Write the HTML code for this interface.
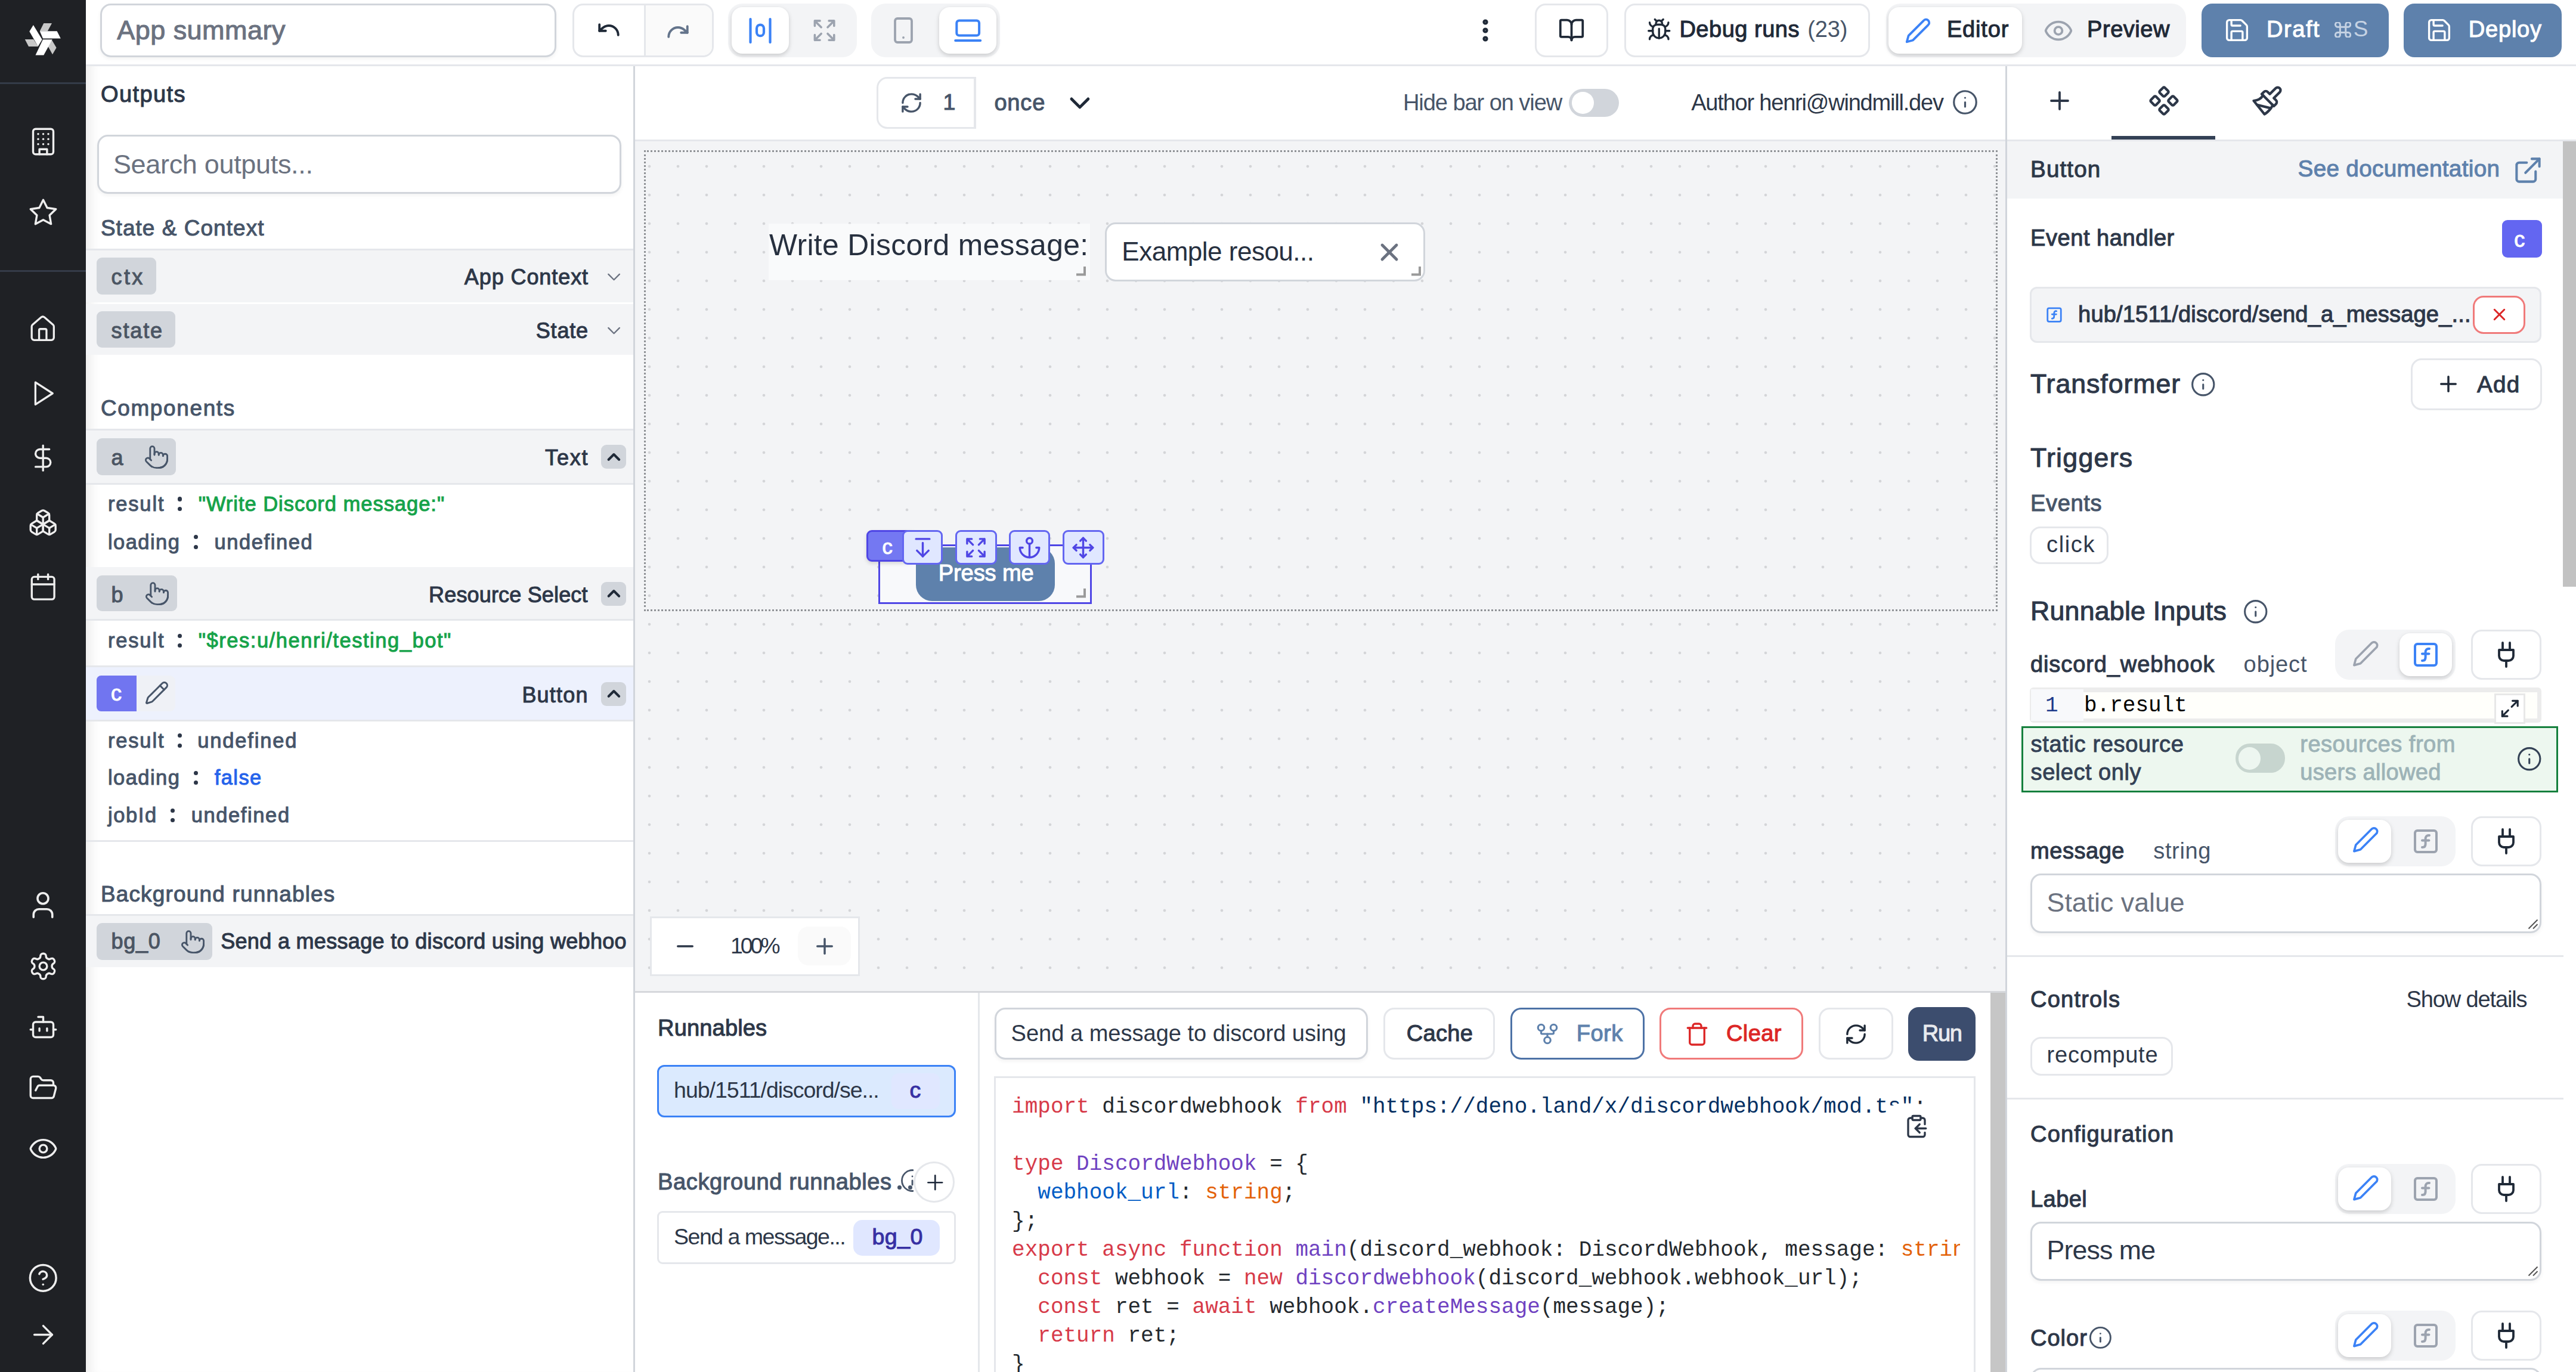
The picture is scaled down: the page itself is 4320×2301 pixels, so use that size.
<!DOCTYPE html><html><head><meta charset="utf-8"><style>html{zoom:3}
body{margin:0;width:1440px;height:767px;overflow:hidden;position:relative;background:#fff;font-family:"Liberation Sans",sans-serif;}
.a{position:absolute;box-sizing:border-box}
.t{position:absolute;white-space:nowrap;line-height:1;font-family:"Liberation Sans",sans-serif}
.m{font-family:"Liberation Mono",monospace;white-space:pre}
.b{font-weight:700}
</style></head><body><div class="a" style="left:0px;top:0px;width:48px;height:767px;background:#1f2125"></div>
<div class="a" style="left:0px;top:46px;width:48px;height:1px;background:#343b48"></div>
<div class="a" style="left:0px;top:151px;width:48px;height:1px;background:#343b48"></div>
<svg class="a" style="left:0;top:0;width:48px;height:48px" viewBox="0 0 48 48">
<path d="M16.45 17.6 L18.63 14.0 L23.55 22.08 L21.26 25.9 Z" fill="#fff"/>
<path d="M22.24 17.38 L24.43 13.0 L29.0 13.0 L26.6 17.38 Z" fill="#c8c8c8"/>
<path d="M22.24 17.38 L31.86 17.38 L33.93 21.53 L23.99 21.53 Z" fill="#fff"/>
<path d="M26.83 25.9 L29.0 22.4 L31.53 26.67 L29.34 30.4 Z" fill="#c8c8c8"/>
<path d="M23.99 22.08 L29.23 22.08 L24.43 30.82 L19.84 30.82 Z" fill="#fff"/>
<path d="M13.93 21.97 L18.74 21.97 L21.37 26.0 L16.0 26.0 Z" fill="#c8c8c8"/>
</svg>
<svg class="a" style="left:15.5px;top:70.5px;width:17px;height:17px;" viewBox="0 0 24 24" fill="none" stroke="#eeeeee" stroke-width="1.6" stroke-linecap="round" stroke-linejoin="round"><rect width="16" height="20" x="4" y="2" rx="2" ry="2"/><path d="M9 22v-4h6v4"/><path d="M8 6h.01"/><path d="M16 6h.01"/><path d="M12 6h.01"/><path d="M12 10h.01"/><path d="M12 14h.01"/><path d="M16 10h.01"/><path d="M16 14h.01"/><path d="M8 10h.01"/><path d="M8 14h.01"/></svg>
<svg class="a" style="left:15.5px;top:110.3px;width:17px;height:17px;" viewBox="0 0 24 24" fill="none" stroke="#eeeeee" stroke-width="1.6" stroke-linecap="round" stroke-linejoin="round"><polygon points="12 2 15.09 8.26 22 9.27 17 14.14 18.18 21.02 12 17.77 5.82 21.02 7 14.14 2 9.27 8.91 8.26 12 2"/></svg>
<svg class="a" style="left:15.75px;top:175.75px;width:16.5px;height:16.5px;" viewBox="0 0 24 24" fill="none" stroke="#eeeeee" stroke-width="1.6" stroke-linecap="round" stroke-linejoin="round"><path d="M15 21v-8a1 1 0 0 0-1-1h-4a1 1 0 0 0-1 1v8"/><path d="M3 10a2 2 0 0 1 .709-1.528l7-5.999a2 2 0 0 1 2.582 0l7 5.999A2 2 0 0 1 21 10v9a2 2 0 0 1-2 2H5a2 2 0 0 1-2-2z"/></svg>
<svg class="a" style="left:15.75px;top:211.75px;width:16.5px;height:16.5px;" viewBox="0 0 24 24" fill="none" stroke="#eeeeee" stroke-width="1.6" stroke-linecap="round" stroke-linejoin="round"><polygon points="6 3 20 12 6 21 6 3"/></svg>
<svg class="a" style="left:15.6px;top:247.6px;width:16.8px;height:16.8px;" viewBox="0 0 24 24" fill="none" stroke="#eeeeee" stroke-width="1.6" stroke-linecap="round" stroke-linejoin="round"><line x1="12" x2="12" y1="2" y2="22"/><path d="M17 5H9.5a3.5 3.5 0 0 0 0 7h5a3.5 3.5 0 0 1 0 7H6"/></svg>
<svg class="a" style="left:15.6px;top:283.6px;width:16.8px;height:16.8px;" viewBox="0 0 24 24" fill="none" stroke="#eeeeee" stroke-width="1.6" stroke-linecap="round" stroke-linejoin="round"><path d="M2.97 12.92A2 2 0 0 0 2 14.63v3.24a2 2 0 0 0 .97 1.71l3 1.8a2 2 0 0 0 2.06 0L12 19v-5.5l-5-3-4.03 2.42Z"/><path d="m7 16.5-4.74-2.85"/><path d="m7 16.5 5-3"/><path d="M7 16.5v5.17"/><path d="M12 13.5V19l3.97 2.38a2 2 0 0 0 2.06 0l3-1.8a2 2 0 0 0 .97-1.71v-3.24a2 2 0 0 0-.97-1.71L17 10.5l-5 3Z"/><path d="m17 16.5-5-3"/><path d="m17 16.5 4.74-2.85"/><path d="M17 16.5v5.17"/><path d="M7.97 4.42A2 2 0 0 0 7 6.13v4.37l5 3 5-3V6.13a2 2 0 0 0-.97-1.71l-3-1.8a2 2 0 0 0-2.06 0l-3 1.8Z"/><path d="M12 8 7.26 5.15"/><path d="m12 8 4.74-2.85"/><path d="M12 13.5V8"/></svg>
<svg class="a" style="left:15.6px;top:319.6px;width:16.8px;height:16.8px;" viewBox="0 0 24 24" fill="none" stroke="#eeeeee" stroke-width="1.6" stroke-linecap="round" stroke-linejoin="round"><rect width="18" height="18" x="3" y="4" rx="2"/><line x1="16" x2="16" y1="2" y2="6"/><line x1="8" x2="8" y1="2" y2="6"/><line x1="3" x2="21" y1="10" y2="10"/></svg>
<svg class="a" style="left:15px;top:497px;width:18px;height:18px;" viewBox="0 0 24 24" fill="none" stroke="#eeeeee" stroke-width="1.6" stroke-linecap="round" stroke-linejoin="round"><path d="M19 21v-2a4 4 0 0 0-4-4H9a4 4 0 0 0-4 4v2"/><circle cx="12" cy="7" r="4"/></svg>
<svg class="a" style="left:15.5px;top:531.5px;width:17px;height:17px;" viewBox="0 0 24 24" fill="none" stroke="#eeeeee" stroke-width="1.6" stroke-linecap="round" stroke-linejoin="round"><path d="M12.22 2h-.44a2 2 0 0 0-2 2v.18a2 2 0 0 1-1 1.73l-.43.25a2 2 0 0 1-2 0l-.15-.08a2 2 0 0 0-2.73.73l-.22.38a2 2 0 0 0 .73 2.73l.15.1a2 2 0 0 1 1 1.72v.51a2 2 0 0 1-1 1.74l-.15.09a2 2 0 0 0-.73 2.73l.22.38a2 2 0 0 0 2.73.73l.15-.08a2 2 0 0 1 2 0l.43.25a2 2 0 0 1 1 1.73V20a2 2 0 0 0 2 2h.44a2 2 0 0 0 2-2v-.18a2 2 0 0 1 1-1.73l.43-.25a2 2 0 0 1 2 0l.15.08a2 2 0 0 0 2.73-.73l.22-.39a2 2 0 0 0-.73-2.73l-.15-.08a2 2 0 0 1-1-1.74v-.5a2 2 0 0 1 1-1.74l.15-.09a2 2 0 0 0 .73-2.73l-.22-.38a2 2 0 0 0-2.73-.73l-.15.08a2 2 0 0 1-2 0l-.43-.25a2 2 0 0 1-1-1.73V4a2 2 0 0 0-2-2z"/><circle cx="12" cy="12" r="3"/></svg>
<svg class="a" style="left:15.5px;top:565.5px;width:17px;height:17px;" viewBox="0 0 24 24" fill="none" stroke="#eeeeee" stroke-width="1.6" stroke-linecap="round" stroke-linejoin="round"><path d="M12 8V4H8"/><rect width="16" height="12" x="4" y="8" rx="2"/><path d="M2 14h2"/><path d="M20 14h2"/><path d="M15 13v2"/><path d="M9 13v2"/></svg>
<svg class="a" style="left:15.5px;top:599.5px;width:17px;height:17px;" viewBox="0 0 24 24" fill="none" stroke="#eeeeee" stroke-width="1.6" stroke-linecap="round" stroke-linejoin="round"><path d="m6 14 1.5-2.9A2 2 0 0 1 9.24 10H20a2 2 0 0 1 1.94 2.5l-1.54 6a2 2 0 0 1-1.95 1.5H4a2 2 0 0 1-2-2V5a2 2 0 0 1 2-2h3.9a2 2 0 0 1 1.69.9l.81 1.2a2 2 0 0 0 1.67.9H18a2 2 0 0 1 2 2v2"/></svg>
<svg class="a" style="left:15.5px;top:633.5px;width:17px;height:17px;" viewBox="0 0 24 24" fill="none" stroke="#eeeeee" stroke-width="1.6" stroke-linecap="round" stroke-linejoin="round"><path d="M2.062 12.348a1 1 0 0 1 0-.696 10.75 10.75 0 0 1 19.876 0 1 1 0 0 1 0 .696 10.75 10.75 0 0 1-19.876 0"/><circle cx="12" cy="12" r="3"/></svg>
<svg class="a" style="left:15.25px;top:705.75px;width:17.5px;height:17.5px;" viewBox="0 0 24 24" fill="none" stroke="#eeeeee" stroke-width="1.6" stroke-linecap="round" stroke-linejoin="round"><circle cx="12" cy="12" r="10"/><path d="M9.09 9a3 3 0 0 1 5.83 1c0 2-3 3-3 3"/><path d="M12 17h.01"/></svg>
<svg class="a" style="left:15.5px;top:737.5px;width:17px;height:17px;" viewBox="0 0 24 24" fill="none" stroke="#eeeeee" stroke-width="1.6" stroke-linecap="round" stroke-linejoin="round"><path d="M5 12h14"/><path d="m12 5 7 7-7 7"/></svg>
<div class="a" style="left:48px;top:36px;width:1392px;height:1px;background:#e5e7eb"></div>
<div class="a" style="left:56px;top:2px;width:255px;height:30px;border:1px solid #d1d5db;border-radius:6px;box-shadow:0 1px 2px rgba(0,0,0,.05)"></div>
<span class="t " data-k="App summary|65.4|22.1" style="left:65.4px;top:9.4px;font-size:15px;color:#6b7280;letter-spacing:0.157px;-webkit-text-stroke:0.35px #6b7280;">App summary</span>
<div class="a" style="left:320px;top:2px;width:79px;height:30px;border:1px solid #e5e7eb;border-radius:6px;overflow:hidden"><div style="position:absolute;left:39px;top:0;right:0;bottom:0;background:#fafafa;border-left:1px solid #e5e7eb"></div></div>
<svg class="a" style="left:333.2px;top:9.8px;width:14px;height:14px;" viewBox="0 0 24 24" fill="none" stroke="#1f2937" stroke-width="2.2" stroke-linecap="round" stroke-linejoin="round"><path d="M3 7v6h6"/><path d="M21 17a9 9 0 0 0-9-9 9 9 0 0 0-6 2.3L3 13"/></svg>
<svg class="a" style="left:372px;top:10.5px;width:14px;height:14px;" viewBox="0 0 24 24" fill="none" stroke="#64748b" stroke-width="2.2" stroke-linecap="round" stroke-linejoin="round"><path d="M21 7v6h-6"/><path d="M3 17a9 9 0 0 1 9-9 9 9 0 0 1 6 2.3l3 2.7"/></svg>
<div class="a" style="left:407px;top:2px;width:72px;height:30px;background:#f3f4f6;border-radius:8px"></div>
<div class="a" style="left:409px;top:4px;width:32px;height:26px;background:#fff;border-radius:6px;box-shadow:0 1px 3px rgba(0,0,0,.12),0 1px 2px rgba(0,0,0,.06)"></div>
<svg class="a" style="left:418px;top:9.5px;width:14px;height:15px" viewBox="0 0 14 15" fill="none" stroke="#3b82f6" stroke-width="1.4" stroke-linecap="round"><path d="M1.5 1v13"/><path d="M12.5 1v13"/><rect x="5" y="4.2" width="4" height="6.2" rx="2"/></svg>
<svg class="a" style="left:453.8px;top:9.2px;width:14.4px;height:15.4px;" viewBox="0 0 24 24" fill="none" stroke="#9ca3af" stroke-width="2" stroke-linecap="round" stroke-linejoin="round"><path d="m21 21-6-6m6 6v-4.8m0 4.8h-4.8"/><path d="M3 16.2V21m0 0h4.8M3 21l6-6"/><path d="M21 7.8V3m0 0h-4.8M21 3l-6 6"/><path d="M3 7.8V3m0 0h4.8M3 3l6 6"/></svg>
<div class="a" style="left:487px;top:2px;width:72px;height:30px;background:#f3f4f6;border-radius:8px"></div>
<div class="a" style="left:525px;top:4px;width:32px;height:26px;background:#fff;border-radius:6px;box-shadow:0 1px 3px rgba(0,0,0,.12),0 1px 2px rgba(0,0,0,.06)"></div>
<svg class="a" style="left:497px;top:9px;width:16px;height:16px;" viewBox="0 0 24 24" fill="none" stroke="#9ca3af" stroke-width="1.9" stroke-linecap="round" stroke-linejoin="round"><rect width="14" height="20" x="5" y="2" rx="2" ry="2"/><path d="M12 18h.01"/></svg>
<svg class="a" style="left:532.6px;top:8.6px;width:16.8px;height:16.8px;" viewBox="0 0 24 24" fill="none" stroke="#3b82f6" stroke-width="1.9" stroke-linecap="round" stroke-linejoin="round"><rect width="18" height="12" x="3" y="4" rx="2" ry="2"/><line x1="2" x2="22" y1="20" y2="20"/></svg>
<svg class="a" style="left:822.4px;top:9px;width:16px;height:16px;" viewBox="0 0 24 24" fill="none" stroke="#1f2937" stroke-width="2.6" stroke-linecap="round" stroke-linejoin="round"><circle cx="12" cy="12" r="1"/><circle cx="12" cy="5" r="1"/><circle cx="12" cy="19" r="1"/></svg>
<div class="a" style="left:858px;top:2px;width:41px;height:30px;border:1px solid #e5e7eb;border-radius:6px"></div>
<svg class="a" style="left:871px;top:9.3px;width:15px;height:15px;" viewBox="0 0 24 24" fill="none" stroke="#1f2937" stroke-width="2" stroke-linecap="round" stroke-linejoin="round"><path d="M12 7v14"/><path d="M3 18a1 1 0 0 1-1-1V4a1 1 0 0 1 1-1h5a4 4 0 0 1 4 4 4 4 0 0 1 4-4h5a1 1 0 0 1 1 1v13a1 1 0 0 1-1 1h-6a3 3 0 0 0-3 3 3 3 0 0 0-3-3z"/></svg>
<div class="a" style="left:908px;top:2px;width:137.4px;height:30px;border:1px solid #e5e7eb;border-radius:6px"></div>
<svg class="a" style="left:919.5px;top:9.6px;width:15.5px;height:14px;" viewBox="0 0 24 24" fill="none" stroke="#1f2937" stroke-width="1.9" stroke-linecap="round" stroke-linejoin="round"><path d="m8 2 1.88 1.88"/><path d="M14.12 3.88 16 2"/><path d="M9 7.13v-1a3.003 3.003 0 1 1 6 0v1"/><path d="M12 20c-3.3 0-6-2.7-6-6v-3a4 4 0 0 1 4-4h4a4 4 0 0 1 4 4v3c0 3.3-2.7 6-6 6"/><path d="M12 20v-9"/><path d="M6.53 9C4.6 8.8 3 7.1 3 5"/><path d="M6 13H2"/><path d="M3 21c0-2.1 1.7-3.9 3.8-4"/><path d="M20.97 5c0 2.1-1.6 3.8-3.5 4"/><path d="M22 13h-4"/><path d="M17.2 17c2.1.1 3.8 1.9 3.8 4"/></svg>
<span class="t " data-k="Debug runs|938.8|20.8" style="left:938.8px;top:10.05px;font-size:12.7px;color:#1f2937;letter-spacing:0.156px;-webkit-text-stroke:0.35px #1f2937;">Debug runs</span>
<span class="t " data-k="(23)|1010.4|20.8" style="left:1010.4px;top:10.05px;font-size:12.7px;color:#475569;letter-spacing:-0.054px;">(23)</span>
<div class="a" style="left:1054.2px;top:2px;width:167.8px;height:30px;background:#f3f4f6;border-radius:8px"></div>
<div class="a" style="left:1055.8px;top:4px;width:74.6px;height:26px;background:#fff;border-radius:6px;box-shadow:0 1px 3px rgba(0,0,0,.12),0 1px 2px rgba(0,0,0,.06)"></div>
<svg class="a" style="left:1063.5px;top:9.5px;width:17px;height:15px;" viewBox="0 0 24 24" fill="none" stroke="#3b82f6" stroke-width="2" stroke-linecap="round" stroke-linejoin="round"><path d="M17 3a2.85 2.83 0 1 1 4 4L7.5 20.5 2 22l1.5-5.5Z"/></svg>
<span class="t " data-k="Editor|1088.3|20.8" style="left:1088.3px;top:10.05px;font-size:12.7px;color:#1f2937;letter-spacing:0.269px;-webkit-text-stroke:0.35px #1f2937;">Editor</span>
<svg class="a" style="left:1141.5px;top:8.5px;width:18px;height:17px;" viewBox="0 0 24 24" fill="none" stroke="#9ca3af" stroke-width="1.8" stroke-linecap="round" stroke-linejoin="round"><path d="M2.062 12.348a1 1 0 0 1 0-.696 10.75 10.75 0 0 1 19.876 0 1 1 0 0 1 0 .696 10.75 10.75 0 0 1-19.876 0"/><circle cx="12" cy="12" r="3"/></svg>
<span class="t " data-k="Preview|1166.7|20.8" style="left:1166.7px;top:10.05px;font-size:12.7px;color:#1f2937;letter-spacing:0.162px;-webkit-text-stroke:0.35px #1f2937;">Preview</span>
<div class="a" style="left:1230.5px;top:2px;width:104.8px;height:30px;background:#5e81ac;border-radius:6px"></div>
<svg class="a" style="left:1243px;top:9.3px;width:15px;height:15px;" viewBox="0 0 24 24" fill="none" stroke="#ffffff" stroke-width="1.8" stroke-linecap="round" stroke-linejoin="round"><path d="M15.2 3a2 2 0 0 1 1.4.6l3.8 3.8a2 2 0 0 1 .6 1.4V19a2 2 0 0 1-2 2H5a2 2 0 0 1-2-2V5a2 2 0 0 1 2-2z"/><path d="M17 21v-7a1 1 0 0 0-1-1H8a1 1 0 0 0-1 1v7"/><path d="M7 3v4a1 1 0 0 0 1 1h7"/></svg>
<span class="t " data-k="Draft|1267|20.8" style="left:1267px;top:10.05px;font-size:12.7px;color:#ffffff;letter-spacing:0.513px;-webkit-text-stroke:0.35px #ffffff;">Draft</span>
<svg class="a" style="left:1305px;top:12.4px;width:9.4px;height:8.6px" viewBox="0 0 12 11" fill="none" stroke="#c5d2e3" stroke-width="1.25"><path d="M4 3.5v4M8 3.5v4M4 3.5h4M4 7.5h4"/><path d="M4 3.5H2.5A1.7 1.7 0 1 1 4 1.9V3.5M8 3.5V1.9A1.7 1.7 0 1 1 9.5 3.5H8M8 7.5h1.5A1.7 1.7 0 1 1 8 9.1V7.5M4 7.5v1.6A1.7 1.7 0 1 1 2.5 7.5H4"/></svg>
<span class="t " data-k="S|1315.6|20.9" style="left:1315.6px;top:10.49px;font-size:12.3px;color:#c5d2e3;">S</span>
<div class="a" style="left:1343.5px;top:2px;width:88.5px;height:30px;background:#5e81ac;border-radius:6px"></div>
<svg class="a" style="left:1356px;top:9.3px;width:15px;height:15px;" viewBox="0 0 24 24" fill="none" stroke="#ffffff" stroke-width="1.8" stroke-linecap="round" stroke-linejoin="round"><path d="M15.2 3a2 2 0 0 1 1.4.6l3.8 3.8a2 2 0 0 1 .6 1.4V19a2 2 0 0 1-2 2H5a2 2 0 0 1-2-2V5a2 2 0 0 1 2-2z"/><path d="M17 21v-7a1 1 0 0 0-1-1H8a1 1 0 0 0-1 1v7"/><path d="M7 3v4a1 1 0 0 0 1 1h7"/></svg>
<span class="t " data-k="Deploy|1379.9|20.8" style="left:1379.9px;top:10.05px;font-size:12.7px;color:#ffffff;letter-spacing:0.260px;-webkit-text-stroke:0.35px #ffffff;">Deploy</span>
<div class="a" style="left:48px;top:37px;width:306px;height:730px;background:#fff;box-shadow:inset 7px 0 6px -4px rgba(0,0,0,.07)"></div>
<div class="a" style="left:354px;top:37px;width:1px;height:730px;background:#d1d5db"></div>
<span class="t " data-k="Outputs|56.3|57.1" style="left:56.3px;top:46.35px;font-size:12.7px;color:#2d3748;letter-spacing:0.460px;-webkit-text-stroke:0.35px #2d3748;">Outputs</span>
<div class="a" style="left:54.3px;top:75.4px;width:293.2px;height:32.9px;border:1px solid #d1d5db;border-radius:6px;box-shadow:0 1px 2px rgba(0,0,0,.05)"></div>
<span class="t " data-k="Search outputs...|63.3|97.1" style="left:63.3px;top:84.4px;font-size:15px;color:#6b7280;letter-spacing:-0.107px;">Search outputs...</span>
<span class="t " data-k="State &amp; Context|56.3|132.2" style="left:56.3px;top:121.79px;font-size:12.3px;color:#475569;letter-spacing:0.361px;-webkit-text-stroke:0.35px #475569;">State &amp; Context</span>
<div class="a" style="left:48px;top:139px;width:306px;height:1px;background:#e5e7eb"></div>
<div class="a" style="left:48px;top:140px;width:306px;height:29px;background:#f3f4f6"></div>
<div class="a" style="left:48px;top:170px;width:306px;height:28.3px;background:#f3f4f6"></div>
<div class="a" style="left:54px;top:144px;width:33.3px;height:20.75px;background:#d1d5db;border-radius:3px"></div>
<span class="t " data-k="ctx|62.2|159" style="left:62.2px;top:148.84px;font-size:12px;color:#4b5563;letter-spacing:1.128px;-webkit-text-stroke:0.35px #4b5563;">ctx</span>
<span class="t " data-k="App Context|259.6|159" style="left:259.6px;top:148.84px;font-size:12px;color:#2d3748;letter-spacing:0.305px;-webkit-text-stroke:0.35px #2d3748;">App Context</span>
<svg class="a" style="left:337px;top:148.5px;width:12.4px;height:12.4px;" viewBox="0 0 24 24" fill="none" stroke="#6b7280" stroke-width="1.5" stroke-linecap="round" stroke-linejoin="round"><path d="m6 9 6 6 6-6"/></svg>
<div class="a" style="left:54px;top:174px;width:44px;height:20.3px;background:#d1d5db;border-radius:3px"></div>
<span class="t " data-k="state|62.2|189" style="left:62.2px;top:178.84px;font-size:12px;color:#4b5563;letter-spacing:0.621px;-webkit-text-stroke:0.35px #4b5563;">state</span>
<span class="t " data-k="State|299.6|189" style="left:299.6px;top:178.84px;font-size:12px;color:#2d3748;letter-spacing:0.267px;-webkit-text-stroke:0.35px #2d3748;">State</span>
<svg class="a" style="left:337px;top:178.5px;width:12.4px;height:12.4px;" viewBox="0 0 24 24" fill="none" stroke="#6b7280" stroke-width="1.5" stroke-linecap="round" stroke-linejoin="round"><path d="m6 9 6 6 6-6"/></svg>
<span class="t " data-k="Components|56.3|232.8" style="left:56.3px;top:222.39px;font-size:12.3px;color:#475569;letter-spacing:0.563px;-webkit-text-stroke:0.35px #475569;">Components</span>
<div class="a" style="left:48px;top:239.5px;width:306px;height:1px;background:#e5e7eb"></div>
<div class="a" style="left:48px;top:240.5px;width:306px;height:29.5px;background:#f3f4f6"></div>
<div class="a" style="left:48px;top:270px;width:306px;height:1px;background:#e5e7eb"></div>
<div class="a" style="left:54px;top:245px;width:44.4px;height:20.5px;background:#d1d5db;border-radius:3px"></div>
<span class="t " data-k="a|62.2|260.3" style="left:62.2px;top:250.14px;font-size:12px;color:#4b5563;-webkit-text-stroke:0.35px #4b5563;">a</span>
<svg class="a" style="left:80.2px;top:248.2px;width:14.4px;height:14.4px;" viewBox="0 0 24 24" fill="none" stroke="#475569" stroke-width="1.6" stroke-linecap="round" stroke-linejoin="round"><path d="M22 14a8 8 0 0 1-8 8"/><path d="M18 11v-1a2 2 0 0 0-2-2a2 2 0 0 0-2 2"/><path d="M14 10V9a2 2 0 0 0-2-2a2 2 0 0 0-2 2v1"/><path d="M10 9.5V4a2 2 0 0 0-2-2a2 2 0 0 0-2 2v10"/><path d="M18 11a2 2 0 1 1 4 0v3a8 8 0 0 1-8 8h-2c-2.8 0-4.5-.86-5.99-2.34l-3.6-3.6a2 2 0 0 1 2.83-2.82L7 15"/></svg>
<span class="t " data-k="Text|304.7|260.3" style="left:304.7px;top:250.14px;font-size:12px;color:#2d3748;letter-spacing:0.595px;-webkit-text-stroke:0.35px #2d3748;">Text</span>
<div class="a" style="left:336.1px;top:248.8px;width:14px;height:13.3px;background:#d1d5db;border-radius:3px"></div>
<svg class="a" style="left:337.3px;top:249.5px;width:11.6px;height:11.6px;" viewBox="0 0 24 24" fill="none" stroke="#1f2937" stroke-width="2.8" stroke-linecap="round" stroke-linejoin="round"><path d="m18 15-6-6-6 6"/></svg>
<span class="t " data-k="result|60.3|285.7" style="left:60.3px;top:275.97px;font-size:11.5px;color:#475569;letter-spacing:0.615px;-webkit-text-stroke:0.35px #475569;">result</span>
<div class="a" style="left:99.3px;top:277.8px;width:2.4px;height:2.4px;background:#2d3748;border-radius:50%"></div>
<div class="a" style="left:99.3px;top:283.2px;width:2.4px;height:2.4px;background:#2d3748;border-radius:50%"></div>
<span class="t " data-k="&quot;Write Discord message:&quot;|110.9|285.7" style="left:110.9px;top:275.97px;font-size:11.5px;color:#16a34a;letter-spacing:0.325px;-webkit-text-stroke:0.35px #16a34a;">&quot;Write Discord message:&quot;</span>
<span class="t " data-k="loading|60.3|307" style="left:60.3px;top:297.27px;font-size:11.5px;color:#475569;letter-spacing:0.484px;-webkit-text-stroke:0.35px #475569;">loading</span>
<div class="a" style="left:108.3px;top:299.1px;width:2.4px;height:2.4px;background:#2d3748;border-radius:50%"></div>
<div class="a" style="left:108.3px;top:304.5px;width:2.4px;height:2.4px;background:#2d3748;border-radius:50%"></div>
<span class="t " data-k="undefined|119.8|307" style="left:119.8px;top:297.27px;font-size:11.5px;color:#475569;letter-spacing:0.534px;-webkit-text-stroke:0.35px #475569;">undefined</span>
<div class="a" style="left:48px;top:317px;width:306px;height:29px;background:#f3f4f6"></div>
<div class="a" style="left:48px;top:346px;width:306px;height:1px;background:#e5e7eb"></div>
<div class="a" style="left:54px;top:321.5px;width:45px;height:20px;background:#d1d5db;border-radius:3px"></div>
<span class="t " data-k="b|62.2|336.8" style="left:62.2px;top:326.64px;font-size:12px;color:#4b5563;-webkit-text-stroke:0.35px #4b5563;">b</span>
<svg class="a" style="left:80.8px;top:324.7px;width:14.4px;height:14.4px;" viewBox="0 0 24 24" fill="none" stroke="#475569" stroke-width="1.6" stroke-linecap="round" stroke-linejoin="round"><path d="M22 14a8 8 0 0 1-8 8"/><path d="M18 11v-1a2 2 0 0 0-2-2a2 2 0 0 0-2 2"/><path d="M14 10V9a2 2 0 0 0-2-2a2 2 0 0 0-2 2v1"/><path d="M10 9.5V4a2 2 0 0 0-2-2a2 2 0 0 0-2 2v10"/><path d="M18 11a2 2 0 1 1 4 0v3a8 8 0 0 1-8 8h-2c-2.8 0-4.5-.86-5.99-2.34l-3.6-3.6a2 2 0 0 1 2.83-2.82L7 15"/></svg>
<span class="t " data-k="Resource Select|239.7|336.8" style="left:239.7px;top:326.64px;font-size:12px;color:#2d3748;letter-spacing:0.054px;-webkit-text-stroke:0.35px #2d3748;">Resource Select</span>
<div class="a" style="left:336.1px;top:325.3px;width:14px;height:13.3px;background:#d1d5db;border-radius:3px"></div>
<svg class="a" style="left:337.3px;top:326px;width:11.6px;height:11.6px;" viewBox="0 0 24 24" fill="none" stroke="#1f2937" stroke-width="2.8" stroke-linecap="round" stroke-linejoin="round"><path d="m18 15-6-6-6 6"/></svg>
<span class="t " data-k="result|60.3|362.15" style="left:60.3px;top:352.42px;font-size:11.5px;color:#475569;letter-spacing:0.615px;-webkit-text-stroke:0.35px #475569;">result</span>
<div class="a" style="left:99.3px;top:354.25px;width:2.4px;height:2.4px;background:#2d3748;border-radius:50%"></div>
<div class="a" style="left:99.3px;top:359.65px;width:2.4px;height:2.4px;background:#2d3748;border-radius:50%"></div>
<span class="t " data-k="&quot;$res:u/henri/testing_bot&quot;|110.9|362.15" style="left:110.9px;top:352.42px;font-size:11.5px;color:#16a34a;letter-spacing:0.514px;-webkit-text-stroke:0.35px #16a34a;">&quot;$res:u/henri/testing_bot&quot;</span>
<div class="a" style="left:48px;top:372px;width:306px;height:1px;background:#e5e7eb"></div>
<div class="a" style="left:48px;top:373px;width:306px;height:29.3px;background:#edf1fd"></div>
<div class="a" style="left:48px;top:402.3px;width:306px;height:1px;background:#e5e7eb"></div>
<div class="a" style="left:54px;top:377.5px;width:22.3px;height:20.3px;background:#7175f0;border-radius:2.5px 0 0 2.5px"></div>
<div class="a" style="left:76.3px;top:377.5px;width:21.7px;height:20.3px;background:#eff1f6;border-radius:0 3px 3px 0"></div>
<span class="t " data-k="c|62|391.9" style="left:62px;top:381.74px;font-size:12px;color:#ffffff;-webkit-text-stroke:0.35px #ffffff;">c</span>
<svg class="a" style="left:80.5px;top:380.3px;width:14px;height:14px;" viewBox="0 0 24 24" fill="none" stroke="#475569" stroke-width="1.7" stroke-linecap="round" stroke-linejoin="round"><path d="M21.174 6.812a1 1 0 0 0-3.986-3.987L3.842 16.174a2 2 0 0 0-.5.83l-1.321 4.352a.5.5 0 0 0 .623.622l4.353-1.32a2 2 0 0 0 .83-.497z"/><path d="m15 5 4 4"/></svg>
<span class="t " data-k="Button|291.8|392.8" style="left:291.8px;top:382.64px;font-size:12px;color:#2d3748;letter-spacing:0.399px;-webkit-text-stroke:0.35px #2d3748;">Button</span>
<div class="a" style="left:336.1px;top:381.3px;width:14px;height:13.3px;background:#d1d5db;border-radius:3px"></div>
<svg class="a" style="left:337.3px;top:382px;width:11.6px;height:11.6px;" viewBox="0 0 24 24" fill="none" stroke="#1f2937" stroke-width="2.8" stroke-linecap="round" stroke-linejoin="round"><path d="m18 15-6-6-6 6"/></svg>
<span class="t " data-k="result|60.3|418" style="left:60.3px;top:408.27px;font-size:11.5px;color:#475569;letter-spacing:0.615px;-webkit-text-stroke:0.35px #475569;">result</span>
<div class="a" style="left:99.3px;top:410.1px;width:2.4px;height:2.4px;background:#2d3748;border-radius:50%"></div>
<div class="a" style="left:99.3px;top:415.5px;width:2.4px;height:2.4px;background:#2d3748;border-radius:50%"></div>
<span class="t " data-k="undefined|110.4|418" style="left:110.4px;top:408.27px;font-size:11.5px;color:#475569;letter-spacing:0.609px;-webkit-text-stroke:0.35px #475569;">undefined</span>
<span class="t " data-k="loading|60.3|438.8" style="left:60.3px;top:429.07px;font-size:11.5px;color:#475569;letter-spacing:0.484px;-webkit-text-stroke:0.35px #475569;">loading</span>
<div class="a" style="left:108.3px;top:430.9px;width:2.4px;height:2.4px;background:#2d3748;border-radius:50%"></div>
<div class="a" style="left:108.3px;top:436.3px;width:2.4px;height:2.4px;background:#2d3748;border-radius:50%"></div>
<span class="t " data-k="false|119.9|438.8" style="left:119.9px;top:429.07px;font-size:11.5px;color:#2563eb;letter-spacing:0.476px;-webkit-text-stroke:0.35px #2563eb;">false</span>
<span class="t " data-k="jobId|60.3|459.8" style="left:60.3px;top:450.07px;font-size:11.5px;color:#475569;letter-spacing:0.541px;-webkit-text-stroke:0.35px #475569;">jobId</span>
<div class="a" style="left:95.2px;top:451.9px;width:2.4px;height:2.4px;background:#2d3748;border-radius:50%"></div>
<div class="a" style="left:95.2px;top:457.3px;width:2.4px;height:2.4px;background:#2d3748;border-radius:50%"></div>
<span class="t " data-k="undefined|106.9|459.8" style="left:106.9px;top:450.07px;font-size:11.5px;color:#475569;letter-spacing:0.534px;-webkit-text-stroke:0.35px #475569;">undefined</span>
<div class="a" style="left:48px;top:469.75px;width:306px;height:1px;background:#e5e7eb"></div>
<span class="t " data-k="Background runnables|56.3|504.4" style="left:56.3px;top:493.99px;font-size:12.3px;color:#475569;letter-spacing:0.407px;-webkit-text-stroke:0.35px #475569;">Background runnables</span>
<div class="a" style="left:48px;top:511px;width:306px;height:1px;background:#e5e7eb"></div>
<div class="a" style="left:48px;top:512px;width:306px;height:28.7px;background:#f3f4f6"></div>
<div class="a" style="left:54px;top:516px;width:64.8px;height:20.7px;background:#d1d5db;border-radius:3px"></div>
<span class="t " data-k="bg_0|62.2|530.6" style="left:62.2px;top:520.44px;font-size:12px;color:#4b5563;letter-spacing:0.232px;-webkit-text-stroke:0.35px #4b5563;">bg_0</span>
<svg class="a" style="left:100.6px;top:519.2px;width:14.4px;height:14.4px;" viewBox="0 0 24 24" fill="none" stroke="#475569" stroke-width="1.6" stroke-linecap="round" stroke-linejoin="round"><path d="M22 14a8 8 0 0 1-8 8"/><path d="M18 11v-1a2 2 0 0 0-2-2a2 2 0 0 0-2 2"/><path d="M14 10V9a2 2 0 0 0-2-2a2 2 0 0 0-2 2v1"/><path d="M10 9.5V4a2 2 0 0 0-2-2a2 2 0 0 0-2 2v10"/><path d="M18 11a2 2 0 1 1 4 0v3a8 8 0 0 1-8 8h-2c-2.8 0-4.5-.86-5.99-2.34l-3.6-3.6a2 2 0 0 1 2.83-2.82L7 15"/></svg>
<div class="a" style="left:123px;top:515px;width:227px;height:22px;overflow:hidden">
<span class="t " data-k="Send a message to discord using webhoo|0.4|15.6" style="left:0.4px;top:5.44px;font-size:12px;color:#2d3748;letter-spacing:0.108px;-webkit-text-stroke:0.35px #2d3748;">Send a message to discord using webhoo</span>
</div>
<div class="a" style="left:355px;top:37px;width:766px;height:41px;background:#fff"></div>
<div class="a" style="left:355px;top:78px;width:766px;height:1px;background:#e5e7eb"></div>
<div class="a" style="left:490px;top:43px;width:55.5px;height:29px;border:1px solid #e5e7eb;border-right-width:1.5px;border-radius:6px 0 0 6px"></div>
<svg class="a" style="left:503px;top:51px;width:13px;height:13px;" viewBox="0 0 24 24" fill="none" stroke="#475569" stroke-width="2.1" stroke-linecap="round" stroke-linejoin="round"><path d="M3 12a9 9 0 0 1 9-9 9.75 9.75 0 0 1 6.74 2.74L21 8"/><path d="M21 3v5h-5"/><path d="M21 12a9 9 0 0 1-9 9 9.75 9.75 0 0 1-6.74-2.74L3 16"/><path d="M8 16H3v5"/></svg>
<span class="t " data-k="1|527.2|61.7" style="left:527.2px;top:51.12px;font-size:12.5px;color:#475569;-webkit-text-stroke:0.35px #475569;">1</span>
<span class="t " data-k="once|555.8|61.7" style="left:555.8px;top:50.95px;font-size:12.7px;color:#475569;letter-spacing:0.261px;-webkit-text-stroke:0.35px #475569;">once</span>
<svg class="a" style="left:594.2px;top:48.4px;width:18.6px;height:18.6px;" viewBox="0 0 24 24" fill="none" stroke="#1f2937" stroke-width="2.1" stroke-linecap="round" stroke-linejoin="round"><path d="m6 9 6 6 6-6"/></svg>
<span class="t " data-k="Hide bar on view|784.3|61.6" style="left:784.3px;top:50.85px;font-size:12.7px;color:#475569;letter-spacing:-0.360px;">Hide bar on view</span>
<div class="a" style="left:877px;top:49.6px;width:28px;height:15.8px;background:#d1d5db;border-radius:8px"></div>
<div class="a" style="left:878.8px;top:51.4px;width:12.2px;height:12.2px;background:#fff;border-radius:50%"></div>
<span class="t " data-k="Author henri@windmill.dev|945.4|61.7" style="left:945.4px;top:50.95px;font-size:12.7px;color:#2d3748;letter-spacing:-0.413px;">Author henri@windmill.dev</span>
<svg class="a" style="left:1091px;top:49.75px;width:15px;height:15px;" viewBox="0 0 24 24" fill="none" stroke="#475569" stroke-width="1.7" stroke-linecap="round" stroke-linejoin="round"><circle cx="12" cy="12" r="10"/><path d="M12 16v-4"/><path d="M12 8h.01"/></svg>
<div class="a" style="left:355px;top:79px;width:766px;height:475px;background-color:#f3f4f6;background-image:radial-gradient(circle,#d4d5d8 0.62px,transparent 0.9px);background-size:16px 16px;background-position:0px 6px"></div>
<div class="a" style="left:360px;top:84px;width:756.5px;height:257.8px;border:1px dotted #8f9296"></div>
<div class="a" style="left:429.6px;top:125px;width:179.6px;height:31.8px;background:rgba(249,250,251,.85)"></div>
<span class="t " data-k="Write Discord message:|430|142.9" style="left:430px;top:128.85px;font-size:16.6px;color:#27303f;letter-spacing:0.118px;">Write Discord message:</span>
<svg class="a" style="left:601.5px;top:149px;width:5.4px;height:5.2px" viewBox="0 0 5.4 5.2"><path d="M4 0h1.4v5.2H0V3.8h4z" fill="#9a9a9a"/></svg>
<div class="a" style="left:617.5px;top:124.2px;width:179.2px;height:33.3px;background:#fff;border:1px solid #d1d5db;border-radius:6px"></div>
<span class="t " data-k="Example resou...|627.1|145.8" style="left:627.1px;top:133.36px;font-size:14.7px;color:#27303f;letter-spacing:-0.181px;">Example resou...</span>
<svg class="a" style="left:768.6px;top:133px;width:16px;height:16px;" viewBox="0 0 24 24" fill="none" stroke="#6b7280" stroke-width="2.4" stroke-linecap="round" stroke-linejoin="round"><path d="M18 6 6 18"/><path d="m6 6 12 12"/></svg>
<svg class="a" style="left:789px;top:149px;width:5.4px;height:5.2px" viewBox="0 0 5.4 5.2"><path d="M4 0h1.4v5.2H0V3.8h4z" fill="#9a9a9a"/></svg>
<div class="a" style="left:491px;top:304.4px;width:119.3px;height:33.3px;background:#f8f9fb;border:1px solid #4f46e5"></div>
<div class="a" style="left:512px;top:306px;width:77.5px;height:30px;background:#5e81ac;border-radius:9px"></div>
<span class="t " data-k="Press me|524.6|324.9" style="left:524.6px;top:314.15px;font-size:12.7px;color:#ffffff;letter-spacing:-0.042px;-webkit-text-stroke:0.35px #ffffff;">Press me</span>
<svg class="a" style="left:601.5px;top:329px;width:5.4px;height:5.2px" viewBox="0 0 5.4 5.2"><path d="M4 0h1.4v5.2H0V3.8h4z" fill="#9a9a9a"/></svg>
<div class="a" style="left:484.2px;top:296.3px;width:27.8px;height:17.7px;background:#7478f2;border:1px solid #4f46e5;border-radius:3px;box-shadow:0 1px 2px rgba(0,0,0,.15)"></div>
<span class="t " data-k="c|493.2|309.6" style="left:493.2px;top:299.87px;font-size:11.5px;color:#ffffff;-webkit-text-stroke:0.35px #ffffff;">c</span>
<div class="a" style="left:504.4px;top:296.3px;width:22.7px;height:19.3px;background:#e0e7ff;border:1px solid #6366f1;border-radius:3px"></div>
<svg class="a" style="left:509.25px;top:299.5px;width:13px;height:13px;" viewBox="0 0 24 24" fill="none" stroke="#4f46e5" stroke-width="2.1" stroke-linecap="round" stroke-linejoin="round"><path d="M19 3H5"/><path d="M12 21V7"/><path d="m6 15 6 6 6-6"/></svg>
<div class="a" style="left:534.1px;top:296.3px;width:23.1px;height:19.3px;background:#e0e7ff;border:1px solid #6366f1;border-radius:3px"></div>
<svg class="a" style="left:539.15px;top:299.5px;width:13px;height:13px;" viewBox="0 0 24 24" fill="none" stroke="#4f46e5" stroke-width="2.1" stroke-linecap="round" stroke-linejoin="round"><path d="m21 21-6-6m6 6v-4.8m0 4.8h-4.8"/><path d="M3 16.2V21m0 0h4.8M3 21l6-6"/><path d="M21 7.8V3m0 0h-4.8M21 3l-6 6"/><path d="M3 7.8V3m0 0h4.8M3 3l6 6"/></svg>
<div class="a" style="left:563.9px;top:296.3px;width:23.2px;height:19.3px;background:#e0e7ff;border:1px solid #6366f1;border-radius:3px"></div>
<svg class="a" style="left:569px;top:299.5px;width:13px;height:13px;" viewBox="0 0 24 24" fill="none" stroke="#4f46e5" stroke-width="2.1" stroke-linecap="round" stroke-linejoin="round"><path d="M12 22V8"/><path d="M5 12H2a10 10 0 0 0 20 0h-3"/><circle cx="12" cy="5" r="3"/></svg>
<div class="a" style="left:594px;top:296.3px;width:23.3px;height:19.3px;background:#e0e7ff;border:1px solid #6366f1;border-radius:3px"></div>
<svg class="a" style="left:599.15px;top:299.5px;width:13px;height:13px;" viewBox="0 0 24 24" fill="none" stroke="#4f46e5" stroke-width="2.1" stroke-linecap="round" stroke-linejoin="round"><path d="M12 2v20"/><path d="m15 19-3 3-3-3"/><path d="m19 9 3 3-3 3"/><path d="M2 12h20"/><path d="m5 9-3 3 3 3"/><path d="m9 5 3-3 3 3"/></svg>
<div class="a" style="left:363.2px;top:512.3px;width:117.5px;height:33.4px;background:#fff;border:1px solid #e5e7eb"></div>
<svg class="a" style="left:376px;top:522px;width:14px;height:14px;" viewBox="0 0 24 24" fill="none" stroke="#2d3748" stroke-width="2" stroke-linecap="round" stroke-linejoin="round"><path d="M5 12h14"/></svg>
<span class="t " data-k="100%|408.3|533.2" style="left:408.3px;top:522.62px;font-size:12.5px;color:#2d3748;letter-spacing:-1.361px;">100%</span>
<div class="a" style="left:446px;top:518px;width:29.8px;height:21.8px;background:#fafafa;border-radius:6px"></div>
<svg class="a" style="left:454px;top:522px;width:14px;height:14px;" viewBox="0 0 24 24" fill="none" stroke="#475569" stroke-width="2" stroke-linecap="round" stroke-linejoin="round"><path d="M5 12h14"/><path d="M12 5v14"/></svg>
<div class="a" style="left:355px;top:554px;width:766px;height:1px;background:#d6d8dc"></div>
<div class="a" style="left:355px;top:555px;width:766px;height:212px;background:#fff"></div>
<div class="a" style="left:546.5px;top:555px;width:1px;height:212px;background:#e5e7eb"></div>
<span class="t " data-k="Runnables|367.7|579" style="left:367.7px;top:568.25px;font-size:12.7px;color:#2d3748;letter-spacing:0.041px;-webkit-text-stroke:0.35px #2d3748;">Runnables</span>
<div class="a" style="left:367.2px;top:595.2px;width:167px;height:29.6px;background:#dbeafe;border:1px solid #3b82f6;border-radius:4px"></div>
<span class="t " data-k="hub/1511/discord/se...|376.7|613.75" style="left:376.7px;top:603.17px;font-size:12.5px;color:#2d3748;letter-spacing:-0.342px;">hub/1511/discord/se...</span>
<div class="a" style="left:498.3px;top:600px;width:27.1px;height:20px;background:#e0e7ff;border-radius:4px"></div>
<span class="t " data-k="c|508.5|614" style="left:508.5px;top:603.42px;font-size:12.5px;color:#3730a3;-webkit-text-stroke:0.35px #3730a3;">c</span>
<span class="t " data-k="Background runnables|367.7|665" style="left:367.7px;top:654.25px;font-size:12.7px;color:#475569;letter-spacing:0.191px;-webkit-text-stroke:0.35px #475569;">Background runnables</span>
<div class="a" style="left:497px;top:650px;width:13.5px;height:20px;overflow:hidden">
<svg class="a" style="left:6px;top:2.9px;width:14px;height:14px;" viewBox="0 0 24 24" fill="none" stroke="#475569" stroke-width="1.6" stroke-linecap="round" stroke-linejoin="round"><circle cx="12" cy="12" r="10"/><path d="M12 16v-4"/><path d="M12 8h.01"/></svg>
</div>
<div class="a" style="left:501.5px;top:662.6px;width:2.4px;height:2.4px;background:#475569;border-radius:50%"></div>
<div class="a" style="left:507.6px;top:662.6px;width:2.4px;height:2.4px;background:#475569;border-radius:50%"></div>
<div class="a" style="left:510.8px;top:649.2px;width:22.95px;height:23.3px;background:#fff;border:1px solid #e5e7eb;border-radius:50%"></div>
<svg class="a" style="left:515.85px;top:654.35px;width:13.5px;height:13.5px;" viewBox="0 0 24 24" fill="none" stroke="#1e293b" stroke-width="1.6" stroke-linecap="round" stroke-linejoin="round"><path d="M5 12h14"/><path d="M12 5v14"/></svg>
<div class="a" style="left:367.2px;top:677px;width:167px;height:29.7px;background:#fff;border:1px solid #e5e7eb;border-radius:3px"></div>
<span class="t " data-k="Send a message...|376.7|695.8" style="left:376.7px;top:685.22px;font-size:12.5px;color:#2d3748;letter-spacing:-0.502px;">Send a message...</span>
<div class="a" style="left:477px;top:682px;width:48.4px;height:20px;background:#e0e7ff;border-radius:5px"></div>
<span class="t " data-k="bg_0|487.5|695.8" style="left:487.5px;top:685.22px;font-size:12.5px;color:#3730a3;letter-spacing:0.163px;-webkit-text-stroke:0.35px #3730a3;">bg_0</span>
<div class="a" style="left:556px;top:563.3px;width:208.6px;height:29.2px;border:1px solid #d1d5db;border-radius:6px;box-shadow:0 1px 2px rgba(0,0,0,.05)"></div>
<span class="t " data-k="Send a message to discord using|565.2|582" style="left:565.2px;top:571.25px;font-size:12.7px;color:#2d3748;letter-spacing:-0.010px;">Send a message to discord using</span>
<div class="a" style="left:773.3px;top:563.3px;width:62.4px;height:29.2px;border:1px solid #e5e7eb;border-radius:6px"></div>
<span class="t " data-k="Cache|786.25|582" style="left:786.25px;top:571.25px;font-size:12.7px;color:#2d3748;letter-spacing:0.091px;-webkit-text-stroke:0.35px #2d3748;">Cache</span>
<div class="a" style="left:844.2px;top:563.3px;width:75px;height:29.2px;border:1px solid #4d72a6;border-radius:6px"></div>
<svg class="a" style="left:858px;top:571px;width:14px;height:14px;" viewBox="0 0 24 24" fill="none" stroke="#5e81ac" stroke-width="1.8" stroke-linecap="round" stroke-linejoin="round"><circle cx="12" cy="18" r="3"/><circle cx="6" cy="6" r="3"/><circle cx="18" cy="6" r="3"/><path d="M18 9v2c0 .6-.4 1-1 1H7c-.6 0-1-.4-1-1V9"/><path d="M12 12v3"/></svg>
<span class="t " data-k="Fork|881.25|582" style="left:881.25px;top:571.25px;font-size:12.7px;color:#5e81ac;letter-spacing:0.142px;-webkit-text-stroke:0.35px #5e81ac;">Fork</span>
<div class="a" style="left:927.7px;top:563.3px;width:80.2px;height:29.2px;border:1px solid #f07a7a;border-radius:6px"></div>
<svg class="a" style="left:941.5px;top:570.5px;width:14px;height:15px;" viewBox="0 0 24 24" fill="none" stroke="#dc2626" stroke-width="1.9" stroke-linecap="round" stroke-linejoin="round"><path d="M3 6h18"/><path d="M19 6v14c0 1-1 2-2 2H7c-1 0-2-1-2-2V6"/><path d="M8 6V4c0-1 1-2 2-2h4c1 0 2 1 2 2v2"/></svg>
<span class="t " data-k="Clear|965|582" style="left:965px;top:571.25px;font-size:12.7px;color:#dc2626;letter-spacing:0.118px;-webkit-text-stroke:0.35px #dc2626;">Clear</span>
<div class="a" style="left:1016.8px;top:563.3px;width:41.4px;height:29.2px;border:1px solid #e5e7eb;border-radius:6px"></div>
<svg class="a" style="left:1031px;top:571.5px;width:13px;height:13px;" viewBox="0 0 24 24" fill="none" stroke="#1f2937" stroke-width="2.1" stroke-linecap="round" stroke-linejoin="round"><path d="M3 12a9 9 0 0 1 9-9 9.75 9.75 0 0 1 6.74 2.74L21 8"/><path d="M21 3v5h-5"/><path d="M21 12a9 9 0 0 1-9 9 9.75 9.75 0 0 1-6.74-2.74L3 16"/><path d="M8 16H3v5"/></svg>
<div class="a" style="left:1066.7px;top:562.9px;width:37.6px;height:30px;background:#3c4d6e;border-radius:6px"></div>
<span class="t " data-k="Run|1074.6|582" style="left:1074.6px;top:571.25px;font-size:12.7px;color:#e8eaee;letter-spacing:-0.441px;-webkit-text-stroke:0.35px #e8eaee;">Run</span>
<div class="a" style="left:555.8px;top:601.5px;width:548.7px;height:188.5px;border:1px solid #e5e7eb"></div>
<div class="a" style="left:556.8px;top:602.5px;width:539px;height:165px;overflow:hidden">
<span class="t m" data-k="&lt;span style=&quot;color:#d73a49&quot;&gt;import&lt;/span&gt;&lt;span style=&quot;color:#24292e&quot;&gt; discordwebhook &lt;/span&gt;&lt;span style=&quot;color:#d73a49&quot;&gt;from&lt;/span&gt; &lt;span style=&quot;color:#032f62&quot;&gt;&amp;quot;https://deno.land/x/discordwebhook/mod.ts&amp;quot;&lt;/span&gt;&lt;span style=&quot;color:#24292e&quot;&gt;;&lt;/span&gt;|8.9|19.6" style="left:8.9px;top:10.41px;font-size:12px;color:#24292e;"><span style="color:#d73a49">import</span><span style="color:#24292e"> discordwebhook </span><span style="color:#d73a49">from</span> <span style="color:#032f62">&quot;https://deno.land/x/discordwebhook/mod.ts&quot;</span><span style="color:#24292e">;</span></span>
<span class="t m" data-k="&lt;span style=&quot;color:#d73a49&quot;&gt;type&lt;/span&gt; &lt;span style=&quot;color:#6f42c1&quot;&gt;DiscordWebhook&lt;/span&gt;&lt;span style=&quot;color:#24292e&quot;&gt; = {&lt;/span&gt;|8.9|51.6" style="left:8.9px;top:42.41px;font-size:12px;color:#24292e;"><span style="color:#d73a49">type</span> <span style="color:#6f42c1">DiscordWebhook</span><span style="color:#24292e"> = {</span></span>
<span class="t m" data-k="&lt;span style=&quot;color:#005cc5&quot;&gt;  webhook_url&lt;/span&gt;&lt;span style=&quot;color:#24292e&quot;&gt;: &lt;/span&gt;&lt;span style=&quot;color:#e36209&quot;&gt;string&lt;/span&gt;&lt;span style=&quot;color:#24292e&quot;&gt;;&lt;/span&gt;|8.9|67.6" style="left:8.9px;top:58.41px;font-size:12px;color:#24292e;"><span style="color:#005cc5">  webhook_url</span><span style="color:#24292e">: </span><span style="color:#e36209">string</span><span style="color:#24292e">;</span></span>
<span class="t m" data-k="&lt;span style=&quot;color:#24292e&quot;&gt;};&lt;/span&gt;|8.9|83.6" style="left:8.9px;top:74.41px;font-size:12px;color:#24292e;"><span style="color:#24292e">};</span></span>
<span class="t m" data-k="&lt;span style=&quot;color:#d73a49&quot;&gt;export&lt;/span&gt; &lt;span style=&quot;color:#d73a49&quot;&gt;async&lt;/span&gt; &lt;span style=&quot;color:#d73a49&quot;&gt;function&lt;/span&gt; &lt;span style=&quot;color:#6f42c1&quot;&gt;main&lt;/span&gt;&lt;span style=&quot;color:#24292e&quot;&gt;(discord_webhook: DiscordWebhook, message: &lt;/span&gt;&lt;span style=&quot;color:#e36209&quot;&gt;string&lt;/span&gt;&lt;span style=&quot;color:#24292e&quot;&gt;) {&lt;/span&gt;|8.9|99.6" style="left:8.9px;top:90.41px;font-size:12px;color:#24292e;"><span style="color:#d73a49">export</span> <span style="color:#d73a49">async</span> <span style="color:#d73a49">function</span> <span style="color:#6f42c1">main</span><span style="color:#24292e">(discord_webhook: DiscordWebhook, message: </span><span style="color:#e36209">string</span><span style="color:#24292e">) {</span></span>
<span class="t m" data-k="&lt;span style=&quot;color:#d73a49&quot;&gt;  const&lt;/span&gt;&lt;span style=&quot;color:#24292e&quot;&gt; webhook = &lt;/span&gt;&lt;span style=&quot;color:#d73a49&quot;&gt;new&lt;/span&gt; &lt;span style=&quot;color:#6f42c1&quot;&gt;discordwebhook&lt;/span&gt;&lt;span style=&quot;color:#24292e&quot;&gt;(discord_webhook.webhook_url);&lt;/span&gt;|8.9|115.6" style="left:8.9px;top:106.41px;font-size:12px;color:#24292e;"><span style="color:#d73a49">  const</span><span style="color:#24292e"> webhook = </span><span style="color:#d73a49">new</span> <span style="color:#6f42c1">discordwebhook</span><span style="color:#24292e">(discord_webhook.webhook_url);</span></span>
<span class="t m" data-k="&lt;span style=&quot;color:#d73a49&quot;&gt;  const&lt;/span&gt;&lt;span style=&quot;color:#24292e&quot;&gt; ret = &lt;/span&gt;&lt;span style=&quot;color:#d73a49&quot;&gt;await&lt;/span&gt;&lt;span style=&quot;color:#24292e&quot;&gt; webhook.&lt;/span&gt;&lt;span style=&quot;color:#6f42c1&quot;&gt;createMessage&lt;/span&gt;&lt;span style=&quot;color:#24292e&quot;&gt;(message);&lt;/span&gt;|8.9|131.6" style="left:8.9px;top:122.41px;font-size:12px;color:#24292e;"><span style="color:#d73a49">  const</span><span style="color:#24292e"> ret = </span><span style="color:#d73a49">await</span><span style="color:#24292e"> webhook.</span><span style="color:#6f42c1">createMessage</span><span style="color:#24292e">(message);</span></span>
<span class="t m" data-k="&lt;span style=&quot;color:#d73a49&quot;&gt;  return&lt;/span&gt;&lt;span style=&quot;color:#24292e&quot;&gt; ret;&lt;/span&gt;|8.9|147.6" style="left:8.9px;top:138.41px;font-size:12px;color:#24292e;"><span style="color:#d73a49">  return</span><span style="color:#24292e"> ret;</span></span>
<span class="t m" data-k="&lt;span style=&quot;color:#24292e&quot;&gt;}&lt;/span&gt;|8.9|163.6" style="left:8.9px;top:154.41px;font-size:12px;color:#24292e;"><span style="color:#24292e">}</span></span>
</div>
<div class="a" style="left:1056px;top:618.1px;width:36px;height:21.9px;background:#fff"></div>
<svg class="a" style="left:1064.4px;top:622.8px;width:14px;height:14px;" viewBox="0 0 24 24" fill="none" stroke="#2d3748" stroke-width="1.9" stroke-linecap="round" stroke-linejoin="round"><rect width="8" height="4" x="8" y="2" rx="1" ry="1"/><path d="M8 4H6a2 2 0 0 0-2 2v14a2 2 0 0 0 2 2h12a2 2 0 0 0 2-2v-2"/><path d="M16 4h2a2 2 0 0 1 2 2v4"/><path d="M21 14H11"/><path d="m15 10-4 4 4 4"/></svg>
<div class="a" style="left:1112.5px;top:555px;width:9px;height:212px;background:#c6c6c6"></div>
<div class="a" style="left:1121px;top:37px;width:1px;height:730px;background:#d1d5db"></div>
<div class="a" style="left:1122px;top:37px;width:318px;height:730px;background:#fff"></div>
<div class="a" style="left:1122px;top:78px;width:318px;height:1px;background:#e5e7eb"></div>
<svg class="a" style="left:1143.3px;top:48.3px;width:16px;height:16px;" viewBox="0 0 24 24" fill="none" stroke="#2d3748" stroke-width="1.9" stroke-linecap="round" stroke-linejoin="round"><path d="M5 12h14"/><path d="M12 5v14"/></svg>
<svg class="a" style="left:1200.5px;top:47.3px;width:18px;height:18px;" viewBox="0 0 24 24" fill="none" stroke="#2d3748" stroke-width="1.9" stroke-linecap="round" stroke-linejoin="round"><path d="M15.536 11.293a1 1 0 0 0 0 1.414l2.376 2.377a1 1 0 0 0 1.414 0l2.377-2.377a1 1 0 0 0 0-1.414l-2.377-2.377a1 1 0 0 0-1.414 0z"/><path d="M2.297 11.293a1 1 0 0 0 0 1.414l2.377 2.377a1 1 0 0 0 1.414 0l2.377-2.377a1 1 0 0 0 0-1.414L6.088 8.916a1 1 0 0 0-1.414 0z"/><path d="M8.916 17.912a1 1 0 0 0 0 1.415l2.377 2.376a1 1 0 0 0 1.414 0l2.377-2.376a1 1 0 0 0 0-1.415l-2.377-2.376a1 1 0 0 0-1.414 0z"/><path d="M8.916 4.674a1 1 0 0 0 0 1.414l2.377 2.376a1 1 0 0 0 1.414 0l2.377-2.376a1 1 0 0 0 0-1.414l-2.377-2.377a1 1 0 0 0-1.414 0z"/></svg>
<svg class="a" style="left:1258.4px;top:47.3px;width:18px;height:18px;" viewBox="0 0 24 24" fill="none" stroke="#2d3748" stroke-width="1.9" stroke-linecap="round" stroke-linejoin="round"><path d="M18.37 2.63 14 7l-1.59-1.59a2 2 0 0 0-2.82 0L8 7l9 9 1.59-1.59a2 2 0 0 0 0-2.82L17 10l4.37-4.37a2.12 2.12 0 1 0-3-3Z"/><path d="M9 8c-2 3-4 3.5-7 4l8 10c2-1 6-5 6-7"/><path d="M14.5 17.5 4.5 15"/></svg>
<div class="a" style="left:1180.4px;top:76px;width:57.9px;height:2px;background:#334155"></div>
<div class="a" style="left:1122px;top:79px;width:311px;height:32px;background:#f3f4f6"></div>
<div class="a" style="left:1432.8px;top:79px;width:7.2px;height:249px;background:#c2c2c2"></div>
<span class="t " data-k="Button|1135|99.2" style="left:1135px;top:88.28px;font-size:12.9px;color:#2d3748;letter-spacing:0.364px;-webkit-text-stroke:0.35px #2d3748;">Button</span>
<span class="t " data-k="See documentation|1284.5|98.8" style="left:1284.5px;top:87.88px;font-size:12.9px;color:#5e81ac;letter-spacing:0.107px;-webkit-text-stroke:0.35px #5e81ac;">See documentation</span>
<svg class="a" style="left:1404.5px;top:86.5px;width:17px;height:17px;" viewBox="0 0 24 24" fill="none" stroke="#5e81ac" stroke-width="1.9" stroke-linecap="round" stroke-linejoin="round"><path d="M15 3h6v6"/><path d="M10 14 21 3"/><path d="M18 13v6a2 2 0 0 1-2 2H5a2 2 0 0 1-2-2V8a2 2 0 0 1 2-2h6"/></svg>
<span class="t " data-k="Event handler|1135|137.5" style="left:1135px;top:126.75px;font-size:12.7px;color:#2d3748;letter-spacing:0.175px;-webkit-text-stroke:0.35px #2d3748;">Event handler</span>
<div class="a" style="left:1398.5px;top:123.1px;width:22.5px;height:20.8px;background:#6366f1;border-radius:3px"></div>
<span class="t " data-k="c|1405.4|138" style="left:1405.4px;top:127.84px;font-size:12px;color:#ffffff;-webkit-text-stroke:0.35px #ffffff;">c</span>
<div class="a" style="left:1134.8px;top:160.25px;width:285.95px;height:31.45px;background:#f3f4f6;border:1px solid #e5e7eb;border-radius:4px"></div>
<svg class="a" style="left:1143.2px;top:170.9px;width:10px;height:10px;" viewBox="0 0 24 24" fill="none" stroke="#3b82f6" stroke-width="2.2" stroke-linecap="round" stroke-linejoin="round"><rect width="18" height="18" x="3" y="3" rx="2" ry="2"/><path d="M9 17c2 0 2.8-1 2.8-2.8V10c0-2 1-3.3 3.2-3"/><path d="M9 11.2h5.7"/></svg>
<span class="t " data-k="hub/1511/discord/send_a_message_...|1161.7|180" style="left:1161.7px;top:169.25px;font-size:12.7px;color:#2d3748;letter-spacing:0.049px;-webkit-text-stroke:0.35px #2d3748;">hub/1511/discord/send_a_message_...</span>
<div class="a" style="left:1382.2px;top:165.25px;width:29.55px;height:21.25px;background:#fff;border:1px solid #f07a7a;border-radius:6px"></div>
<svg class="a" style="left:1391.5px;top:170.4px;width:11px;height:11px;" viewBox="0 0 24 24" fill="none" stroke="#dc2626" stroke-width="2.2" stroke-linecap="round" stroke-linejoin="round"><path d="M18 6 6 18"/><path d="m6 6 12 12"/></svg>
<span class="t " data-k="Transformer|1135|220" style="left:1135px;top:207.39px;font-size:14.9px;color:#2d3748;letter-spacing:0.317px;-webkit-text-stroke:0.35px #2d3748;">Transformer</span>
<svg class="a" style="left:1224.2px;top:207.7px;width:14.5px;height:14.5px;" viewBox="0 0 24 24" fill="none" stroke="#475569" stroke-width="1.7" stroke-linecap="round" stroke-linejoin="round"><circle cx="12" cy="12" r="10"/><path d="M12 16v-4"/><path d="M12 8h.01"/></svg>
<div class="a" style="left:1347.6px;top:200.3px;width:73.4px;height:29.1px;border:1px solid #e5e7eb;border-radius:6px"></div>
<svg class="a" style="left:1361.6px;top:207.7px;width:14px;height:14px;" viewBox="0 0 24 24" fill="none" stroke="#1f2937" stroke-width="2" stroke-linecap="round" stroke-linejoin="round"><path d="M5 12h14"/><path d="M12 5v14"/></svg>
<span class="t " data-k="Add|1384.7|219.6" style="left:1384.7px;top:208.68px;font-size:12.9px;color:#2d3748;letter-spacing:0.381px;-webkit-text-stroke:0.35px #2d3748;">Add</span>
<span class="t " data-k="Triggers|1135|261.25" style="left:1135px;top:248.64px;font-size:14.9px;color:#2d3748;letter-spacing:0.427px;-webkit-text-stroke:0.35px #2d3748;">Triggers</span>
<span class="t " data-k="Events|1135|285.8" style="left:1135px;top:275.05px;font-size:12.7px;color:#475569;letter-spacing:0.201px;-webkit-text-stroke:0.35px #475569;">Events</span>
<div class="a" style="left:1134.8px;top:294.2px;width:43.95px;height:21.2px;border:1px solid #e5e7eb;border-radius:6px"></div>
<span class="t " data-k="click|1144|308.75" style="left:1144px;top:298px;font-size:12.7px;color:#2d3748;letter-spacing:0.532px;">click</span>
<span class="t " data-k="Runnable Inputs|1135|347.1" style="left:1135px;top:334.49px;font-size:14.9px;color:#2d3748;letter-spacing:0.078px;-webkit-text-stroke:0.35px #2d3748;">Runnable Inputs</span>
<svg class="a" style="left:1253.6px;top:334.6px;width:14.5px;height:14.5px;" viewBox="0 0 24 24" fill="none" stroke="#475569" stroke-width="1.7" stroke-linecap="round" stroke-linejoin="round"><circle cx="12" cy="12" r="10"/><path d="M12 16v-4"/><path d="M12 8h.01"/></svg>
<span class="t " data-k="discord_webhook|1135|375.8" style="left:1135px;top:365.05px;font-size:12.7px;color:#2d3748;letter-spacing:0.289px;-webkit-text-stroke:0.35px #2d3748;">discord_webhook</span>
<span class="t " data-k="object|1254.2|375.8" style="left:1254.2px;top:365.05px;font-size:12.7px;color:#475569;letter-spacing:0.288px;">object</span>
<div class="a" style="left:1305.2px;top:352px;width:67.6px;height:28px;background:#f3f4f6;border-radius:8px"></div>
<div class="a" style="left:1341.2px;top:354px;width:29.55px;height:24px;background:#fff;border-radius:6px;box-shadow:0 1px 3px rgba(0,0,0,.12),0 1px 2px rgba(0,0,0,.06)"></div>
<svg class="a" style="left:1314.5px;top:357.5px;width:15.5px;height:15.5px;" viewBox="0 0 24 24" fill="none" stroke="#9ca3af" stroke-width="1.9" stroke-linecap="round" stroke-linejoin="round"><path d="M17 3a2.85 2.83 0 1 1 4 4L7.5 20.5 2 22l1.5-5.5Z"/></svg>
<svg class="a" style="left:1348px;top:358px;width:16px;height:16px;" viewBox="0 0 24 24" fill="none" stroke="#3b82f6" stroke-width="2" stroke-linecap="round" stroke-linejoin="round"><rect width="18" height="18" x="3" y="3" rx="2" ry="2"/><path d="M9 17c2 0 2.8-1 2.8-2.8V10c0-2 1-3.3 3.2-3"/><path d="M9 11.2h5.7"/></svg>
<div class="a" style="left:1381.2px;top:352px;width:39.55px;height:28px;border:1px solid #e5e7eb;border-radius:6px;background:#fff"></div>
<svg class="a" style="left:1393px;top:358px;width:16px;height:16px;" viewBox="0 0 24 24" fill="none" stroke="#1f2937" stroke-width="1.9" stroke-linecap="round" stroke-linejoin="round"><path d="M12 22v-5"/><path d="M9 8V2"/><path d="M15 8V2"/><path d="M18 8v5a4 4 0 0 1-4 4h-4a4 4 0 0 1-4-4V8Z"/></svg>
<div class="a" style="left:1134.6px;top:384.2px;width:286.15px;height:19.8px;background:#ececec;border-radius:2px"></div>
<div class="a" style="left:1135.4px;top:385.2px;width:29.2px;height:17.8px;background:#f8f9fb"></div>
<div class="a" style="left:1164.6px;top:387px;width:253.9px;height:14.5px;background:#fffffb"></div>
<span class="t m" data-k="1|1143.3|397.9" style="left:1143.3px;top:388.71px;font-size:12px;color:#1e3a8a;">1</span>
<span class="t m" data-k="b.result|1165|397.9" style="left:1165px;top:388.71px;font-size:12px;color:#000000;">b.result</span>
<div class="a" style="left:1394.3px;top:387.5px;width:17.5px;height:17.1px;background:#fff;border:1px solid #e8e8e8"></div>
<svg class="a" style="left:1397.25px;top:390.25px;width:11.5px;height:11.5px;" viewBox="0 0 24 24" fill="none" stroke="#1f2937" stroke-width="2.2" stroke-linecap="round" stroke-linejoin="round"><polyline points="15 3 21 3 21 9"/><polyline points="9 21 3 21 3 15"/><line x1="21" x2="14" y1="3" y2="10"/><line x1="3" x2="10" y1="21" y2="14"/></svg>
<div class="a" style="left:1130px;top:406px;width:300px;height:37px;background:#edf7ef;border:1.3px solid #15803d"></div>
<span class="t " data-k="static resource|1135.2|420.3" style="left:1135.2px;top:409.55px;font-size:12.7px;color:#334155;letter-spacing:0.207px;-webkit-text-stroke:0.3px #334155;">static resource</span>
<span class="t " data-k="select only|1135.2|436" style="left:1135.2px;top:425.25px;font-size:12.7px;color:#334155;letter-spacing:0.165px;-webkit-text-stroke:0.3px #334155;">select only</span>
<div class="a" style="left:1249.5px;top:415.8px;width:27.9px;height:16.2px;background:#c7d5cf;border-radius:8px"></div>
<div class="a" style="left:1251.2px;top:417.5px;width:12.6px;height:12.8px;background:#edf6f0;border-radius:50%"></div>
<span class="t " data-k="resources from|1285.75|420.3" style="left:1285.75px;top:409.55px;font-size:12.7px;color:#9db3b7;letter-spacing:0.161px;-webkit-text-stroke:0.3px #9db3b7;">resources from</span>
<span class="t " data-k="users allowed|1285.75|436.1" style="left:1285.75px;top:425.35px;font-size:12.7px;color:#9db3b7;letter-spacing:0.093px;-webkit-text-stroke:0.3px #9db3b7;">users allowed</span>
<svg class="a" style="left:1406.6px;top:417px;width:14.5px;height:14.5px;" viewBox="0 0 24 24" fill="none" stroke="#334155" stroke-width="1.7" stroke-linecap="round" stroke-linejoin="round"><circle cx="12" cy="12" r="10"/><path d="M12 16v-4"/><path d="M12 8h.01"/></svg>
<span class="t " data-k="message|1135|480" style="left:1135px;top:469.25px;font-size:12.7px;color:#2d3748;letter-spacing:0.169px;-webkit-text-stroke:0.35px #2d3748;">message</span>
<span class="t " data-k="string|1203.75|480" style="left:1203.75px;top:469.25px;font-size:12.7px;color:#475569;letter-spacing:0.204px;">string</span>
<div class="a" style="left:1305.2px;top:456.2px;width:67.6px;height:28px;background:#f3f4f6;border-radius:8px"></div>
<div class="a" style="left:1307px;top:458.2px;width:29.6px;height:24px;background:#fff;border-radius:6px;box-shadow:0 1px 3px rgba(0,0,0,.12),0 1px 2px rgba(0,0,0,.06)"></div>
<svg class="a" style="left:1314.5px;top:461.7px;width:15.5px;height:15.5px;" viewBox="0 0 24 24" fill="none" stroke="#3b82f6" stroke-width="1.9" stroke-linecap="round" stroke-linejoin="round"><path d="M17 3a2.85 2.83 0 1 1 4 4L7.5 20.5 2 22l1.5-5.5Z"/></svg>
<svg class="a" style="left:1348px;top:462.2px;width:16px;height:16px;" viewBox="0 0 24 24" fill="none" stroke="#9ca3af" stroke-width="2" stroke-linecap="round" stroke-linejoin="round"><rect width="18" height="18" x="3" y="3" rx="2" ry="2"/><path d="M9 17c2 0 2.8-1 2.8-2.8V10c0-2 1-3.3 3.2-3"/><path d="M9 11.2h5.7"/></svg>
<div class="a" style="left:1381.2px;top:456.2px;width:39.55px;height:28px;border:1px solid #e5e7eb;border-radius:6px;background:#fff"></div>
<svg class="a" style="left:1393px;top:462.2px;width:16px;height:16px;" viewBox="0 0 24 24" fill="none" stroke="#1f2937" stroke-width="1.9" stroke-linecap="round" stroke-linejoin="round"><path d="M12 22v-5"/><path d="M9 8V2"/><path d="M15 8V2"/><path d="M18 8v5a4 4 0 0 1-4 4h-4a4 4 0 0 1-4-4V8Z"/></svg>
<div class="a" style="left:1135px;top:488.3px;width:285.75px;height:33.4px;border:1px solid #d1d5db;border-radius:6px;box-shadow:0 1px 2px rgba(0,0,0,.05)"></div>
<span class="t " data-k="Static value|1144.2|510" style="left:1144.2px;top:497.39px;font-size:14.9px;color:#6b7280;letter-spacing:0.001px;">Static value</span>
<svg class="a" style="left:1413px;top:513.5px;width:6px;height:6px" viewBox="0 0 6 6" stroke="#555" stroke-width="0.7"><path d="M5.5 0.5 0.5 5.5M5.5 3 3 5.5"/></svg>
<div class="a" style="left:1122px;top:534.1px;width:311px;height:1px;background:#e5e7eb"></div>
<span class="t " data-k="Controls|1135|563" style="left:1135px;top:552.25px;font-size:12.7px;color:#2d3748;letter-spacing:0.393px;-webkit-text-stroke:0.35px #2d3748;">Controls</span>
<span class="t " data-k="Show details|1345.2|563" style="left:1345.2px;top:552.25px;font-size:12.7px;color:#2d3748;letter-spacing:-0.394px;">Show details</span>
<div class="a" style="left:1135px;top:579.8px;width:79.6px;height:21.45px;border:1px solid #e5e7eb;border-radius:6px"></div>
<span class="t " data-k="recompute|1144.2|594.2" style="left:1144.2px;top:583.45px;font-size:12.7px;color:#2d3748;letter-spacing:0.256px;">recompute</span>
<div class="a" style="left:1122px;top:613.5px;width:311px;height:1px;background:#e5e7eb"></div>
<span class="t " data-k="Configuration|1135|638.3" style="left:1135px;top:627.55px;font-size:12.7px;color:#2d3748;letter-spacing:0.378px;-webkit-text-stroke:0.35px #2d3748;">Configuration</span>
<span class="t " data-k="Label|1135|674.75" style="left:1135px;top:664px;font-size:12.7px;color:#2d3748;letter-spacing:0.138px;-webkit-text-stroke:0.35px #2d3748;">Label</span>
<div class="a" style="left:1305.2px;top:650.7px;width:67.6px;height:28px;background:#f3f4f6;border-radius:8px"></div>
<div class="a" style="left:1307px;top:652.7px;width:29.6px;height:24px;background:#fff;border-radius:6px;box-shadow:0 1px 3px rgba(0,0,0,.12),0 1px 2px rgba(0,0,0,.06)"></div>
<svg class="a" style="left:1314.5px;top:656.2px;width:15.5px;height:15.5px;" viewBox="0 0 24 24" fill="none" stroke="#3b82f6" stroke-width="1.9" stroke-linecap="round" stroke-linejoin="round"><path d="M17 3a2.85 2.83 0 1 1 4 4L7.5 20.5 2 22l1.5-5.5Z"/></svg>
<svg class="a" style="left:1348px;top:656.7px;width:16px;height:16px;" viewBox="0 0 24 24" fill="none" stroke="#9ca3af" stroke-width="2" stroke-linecap="round" stroke-linejoin="round"><rect width="18" height="18" x="3" y="3" rx="2" ry="2"/><path d="M9 17c2 0 2.8-1 2.8-2.8V10c0-2 1-3.3 3.2-3"/><path d="M9 11.2h5.7"/></svg>
<div class="a" style="left:1381.2px;top:650.7px;width:39.55px;height:28px;border:1px solid #e5e7eb;border-radius:6px;background:#fff"></div>
<svg class="a" style="left:1393px;top:656.7px;width:16px;height:16px;" viewBox="0 0 24 24" fill="none" stroke="#1f2937" stroke-width="1.9" stroke-linecap="round" stroke-linejoin="round"><path d="M12 22v-5"/><path d="M9 8V2"/><path d="M15 8V2"/><path d="M18 8v5a4 4 0 0 1-4 4h-4a4 4 0 0 1-4-4V8Z"/></svg>
<div class="a" style="left:1135px;top:682.9px;width:285.75px;height:33.2px;border:1px solid #d1d5db;border-radius:6px;box-shadow:0 1px 2px rgba(0,0,0,.05)"></div>
<span class="t " data-k="Press me|1144.2|704.3" style="left:1144.2px;top:691.69px;font-size:14.9px;color:#2d3748;letter-spacing:-0.299px;">Press me</span>
<svg class="a" style="left:1413px;top:707.5px;width:6px;height:6px" viewBox="0 0 6 6" stroke="#555" stroke-width="0.7"><path d="M5.5 0.5 0.5 5.5M5.5 3 3 5.5"/></svg>
<span class="t " data-k="Color|1135|752.25" style="left:1135px;top:741.5px;font-size:12.7px;color:#2d3748;letter-spacing:0.318px;-webkit-text-stroke:0.35px #2d3748;">Color</span>
<svg class="a" style="left:1167.2px;top:741px;width:13.6px;height:13.6px;" viewBox="0 0 24 24" fill="none" stroke="#475569" stroke-width="1.7" stroke-linecap="round" stroke-linejoin="round"><circle cx="12" cy="12" r="10"/><path d="M12 16v-4"/><path d="M12 8h.01"/></svg>
<div class="a" style="left:1305.2px;top:732.8px;width:67.6px;height:28px;background:#f3f4f6;border-radius:8px"></div>
<div class="a" style="left:1307px;top:734.8px;width:29.6px;height:24px;background:#fff;border-radius:6px;box-shadow:0 1px 3px rgba(0,0,0,.12),0 1px 2px rgba(0,0,0,.06)"></div>
<svg class="a" style="left:1314.5px;top:738.3px;width:15.5px;height:15.5px;" viewBox="0 0 24 24" fill="none" stroke="#3b82f6" stroke-width="1.9" stroke-linecap="round" stroke-linejoin="round"><path d="M17 3a2.85 2.83 0 1 1 4 4L7.5 20.5 2 22l1.5-5.5Z"/></svg>
<svg class="a" style="left:1348px;top:738.8px;width:16px;height:16px;" viewBox="0 0 24 24" fill="none" stroke="#9ca3af" stroke-width="2" stroke-linecap="round" stroke-linejoin="round"><rect width="18" height="18" x="3" y="3" rx="2" ry="2"/><path d="M9 17c2 0 2.8-1 2.8-2.8V10c0-2 1-3.3 3.2-3"/><path d="M9 11.2h5.7"/></svg>
<div class="a" style="left:1381.2px;top:732.8px;width:39.55px;height:28px;border:1px solid #e5e7eb;border-radius:6px;background:#fff"></div>
<svg class="a" style="left:1393px;top:738.8px;width:16px;height:16px;" viewBox="0 0 24 24" fill="none" stroke="#1f2937" stroke-width="1.9" stroke-linecap="round" stroke-linejoin="round"><path d="M12 22v-5"/><path d="M9 8V2"/><path d="M15 8V2"/><path d="M18 8v5a4 4 0 0 1-4 4h-4a4 4 0 0 1-4-4V8Z"/></svg>
<div class="a" style="left:1135px;top:764.75px;width:285.75px;height:35.25px;border:1px solid #d1d5db;border-radius:6px"></div></body></html>
